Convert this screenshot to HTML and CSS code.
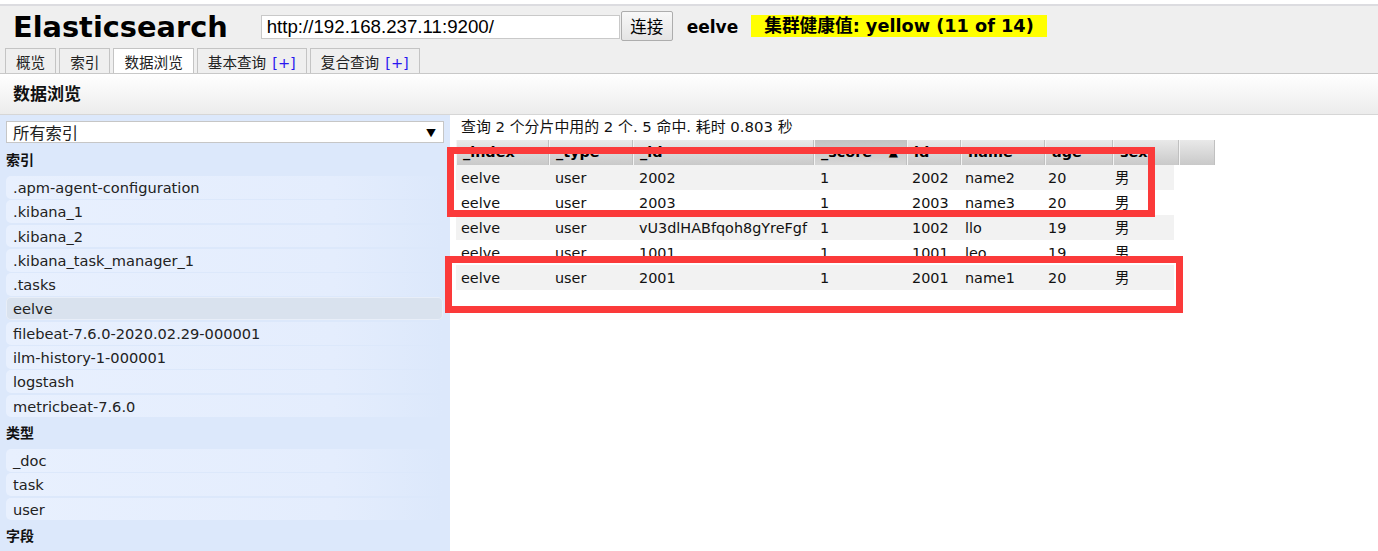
FILE: index.html
```html
<!DOCTYPE html>
<html lang="zh">
<head>
<meta charset="utf-8">
<title>Elasticsearch</title>
<link rel="stylesheet" href="styles.css">
</head>
<body>
<header class="header">
  <div class="topbar">
    <h1 class="logo">Elasticsearch</h1>
    <input class="url" type="text" value="http://192.168.237.11:9200/">
    <button class="connect">连接</button>
    <span class="cluster">eelve</span>
    <span class="health">集群健康值: yellow (11 of 14)</span>
  </div>
  <nav class="tabs">
    <span class="tab">概览</span>
    <span class="tab">索引</span>
    <span class="tab active">数据浏览</span>
    <span class="tab">基本查询<span class="plus">[+]</span></span>
    <span class="tab">复合查询<span class="plus">[+]</span></span>
  </nav>
</header>
<div class="section-title">数据浏览</div>
<main class="main">
  <aside class="sidebar">
    <div class="select"><span>所有索引</span><span class="arrow">▼</span></div>
    <div class="group-title">索引</div>
    <div class="item">.apm-agent-configuration</div>
    <div class="item">.kibana_1</div>
    <div class="item">.kibana_2</div>
    <div class="item">.kibana_task_manager_1</div>
    <div class="item">.tasks</div>
    <div class="item selected">eelve</div>
    <div class="item">filebeat-7.6.0-2020.02.29-000001</div>
    <div class="item">ilm-history-1-000001</div>
    <div class="item">logstash</div>
    <div class="item">metricbeat-7.6.0</div>
    <div class="group-title">类型</div>
    <div class="item">_doc</div>
    <div class="item">task</div>
    <div class="item">user</div>
    <div class="group-title">字段</div>
  </aside>
  <section class="content">
    <div class="info">查询 2 个分片中用的 2 个. 5 命中. 耗时 0.803 秒</div>
    <div class="thead">
      <div class="th">_index</div>
      <div class="th">_type</div>
      <div class="th">_id</div>
      <div class="th sorted"><span>_score</span><span class="sort">▲</span></div>
      <div class="th">id</div>
      <div class="th">name</div>
      <div class="th">age</div>
      <div class="th">sex</div>
      <div class="th"></div>
    </div>
    <div class="row"><div>eelve</div><div>user</div><div>2002</div><div>1</div><div>2002</div><div>name2</div><div>20</div><div>男</div></div>
    <div class="row"><div>eelve</div><div>user</div><div>2003</div><div>1</div><div>2003</div><div>name3</div><div>20</div><div>男</div></div>
    <div class="row"><div>eelve</div><div>user</div><div>vU3dlHABfqoh8gYreFgf</div><div>1</div><div>1002</div><div>llo</div><div>19</div><div>男</div></div>
    <div class="row"><div>eelve</div><div>user</div><div>1001</div><div>1</div><div>1001</div><div>leo</div><div>19</div><div>男</div></div>
    <div class="row"><div>eelve</div><div>user</div><div>2001</div><div>1</div><div>2001</div><div>name1</div><div>20</div><div>男</div></div>
  </section>
</main>
<div class="mark mark-one"></div>
<div class="mark mark-two"></div>
</body>
</html>
```

FILE: styles.css
```css
html, body {
  margin: 0;
  padding: 0;
  height: 100%;
  overflow: hidden;
}
body {
  position: relative;
  background: #ffffff;
  color: #000;
  font-family: "DejaVu Sans", "Noto Sans CJK SC", sans-serif;
  font-size: 14.4px;
  padding-top: 4px;
  box-sizing: border-box;
}

/* ---------- header ---------- */
.header {
  border-top: 2px solid #dcdce0;
  background: #efefef;
  border-bottom: 1px solid #c8c8c8;
}
.topbar {
  height: 42px;
  display: flex;
  align-items: center;
  padding-left: 13px;
}
.logo {
  margin: 0 33px 0 0;
  font-size: 28.8px;
  font-weight: bold;
  line-height: 1;
  color: #000;
}
.url {
  box-sizing: border-box;
  width: 359px;
  height: 24px;
  border: 1px solid #c9c9c9;
  background: #fff;
  padding: 0 5px;
  margin: 0 1px 0 0;
  font-family: "Liberation Sans", Arial, sans-serif;
  font-size: 18.7px;
  color: #000;
  outline: none;
}
.connect {
  box-sizing: border-box;
  width: 52px;
  height: 30px;
  margin: -2px 0 0 0;
  padding: 0;
  border: 1px solid #adadad;
  border-radius: 2px;
  background: linear-gradient(#f8f8f8, #e4e4e4);
  font-family: "Noto Sans CJK SC", sans-serif;
  font-size: 16.5px;
  line-height: 28px;
  color: #000;
}
.cluster {
  margin-left: 14px;
  font-weight: bold;
  font-size: 17px;
}
.health {
  margin-left: 13px;
  margin-top: -2px;
  height: 22px;
  line-height: 22px;
  padding: 0 13px;
  background: #ffff00;
  font-weight: bold;
  font-size: 17.7px;
}

.tabs {
  display: flex;
  gap: 3px;
  padding-left: 5px;
  height: 25px;
}
.tab {
  box-sizing: border-box;
  height: 25px;
  padding: 2px 10px 0;
  border: 1px solid #c4c4c4;
  border-bottom: none;
  background: #efefef;
  font-family: "Noto Sans CJK SC", sans-serif;
  font-size: 14.6px;
  line-height: 22px;
  color: #222;
}
.tab.active {
  background: #ffffff;
}
.plus {
  margin-left: 6px;
  color: #2a17f0;
  font-family: "DejaVu Sans", sans-serif;
  font-size: 14.6px;
}

/* ---------- section title ---------- */
.section-title {
  height: 40px;
  line-height: 38px;
  padding-left: 13px;
  border-bottom: 1px solid #d6d6d6;
  background: linear-gradient(#ffffff, #ececec);
  font-family: "Noto Sans CJK SC", sans-serif;
  font-weight: bold;
  font-size: 17px;
  color: #111;
}

/* ---------- main ---------- */
.main {
  display: flex;
  height: 436px;
}
.sidebar {
  box-sizing: border-box;
  width: 450px;
  flex: none;
  background: #dce8fb;
  padding: 6px 6px 0 6px;
  overflow: hidden;
}
.select {
  box-sizing: border-box;
  height: 22px;
  margin-bottom: 3px;
  display: flex;
  align-items: center;
  justify-content: space-between;
  border: 1px solid #c6c6c6;
  background: #ffffff;
  padding: 0 7px 0 6px;
  font-family: "Noto Sans CJK SC", sans-serif;
  font-size: 16.3px;
  color: #222;
}
.arrow {
  font-size: 10px;
  color: #000;
}
.group-title {
  box-sizing: border-box;
  height: 30px;
  line-height: 27px;
  font-family: "Noto Sans CJK SC", sans-serif;
  font-weight: bold;
  font-size: 14px;
  color: #111;
}
.item {
  box-sizing: border-box;
  height: 22.8px;
  line-height: 22.8px;
  padding-top: 1px;
  margin-bottom: 1.5px;
  margin-right: 1px;
  padding-left: 7px;
  border-radius: 5px;
  background: linear-gradient(to right, #e8f0fe, #e4edfd 75%, #dce8fb);
  font-size: 14.6px;
  color: #222;
}
.item.selected {
  background: #d9e2ee;
  box-shadow: inset 0 0 0 1px #e8eef8;
}

.content {
  flex: 1;
  padding-left: 6px;
}
.info {
  height: 25px;
  line-height: 25px;
  padding-left: 5px;
  font-size: 14.9px;
  color: #111;
}
.thead {
  display: grid;
  grid-template-columns: 93px 84px 181px 93px 54px 84px 68px 66px 36px;
  height: 25px;
}
.th {
  box-sizing: border-box;
  padding-left: 6px;
  line-height: 25px;
  font-weight: bold;
  background: linear-gradient(#e9e9e9, #c9c9c9);
  border-left: 1px solid #f4f4f4;
  border-right: 1px solid #c0c0c0;
  overflow: hidden;
  white-space: nowrap;
}
.th.sorted {
  display: flex;
  justify-content: space-between;
  padding-right: 8px;
  background: linear-gradient(#c3c3c3, #d6d6d6);
}
.sort {
  font-size: 12px;
}
.row {
  display: grid;
  grid-template-columns: 94px 84px 181px 92px 53px 83px 67px 64px;
  width: 718px;
  height: 25px;
}
.row:nth-of-type(odd) {
  background: #f2f2f2;
}
.row > div {
  padding: 2px 0 0 5px;
  line-height: 23px;
  white-space: nowrap;
  overflow: hidden;
  color: #111;
}

/* ---------- red annotation boxes (overlay) ---------- */
.mark {
  position: absolute;
  box-sizing: border-box;
  border: 7px solid #fb3a3a;
}
.mark-one {
  left: 447px;
  top: 147px;
  width: 708px;
  height: 70px;
}
.mark-two {
  left: 445px;
  top: 256px;
  width: 738px;
  height: 57px;
}
```
